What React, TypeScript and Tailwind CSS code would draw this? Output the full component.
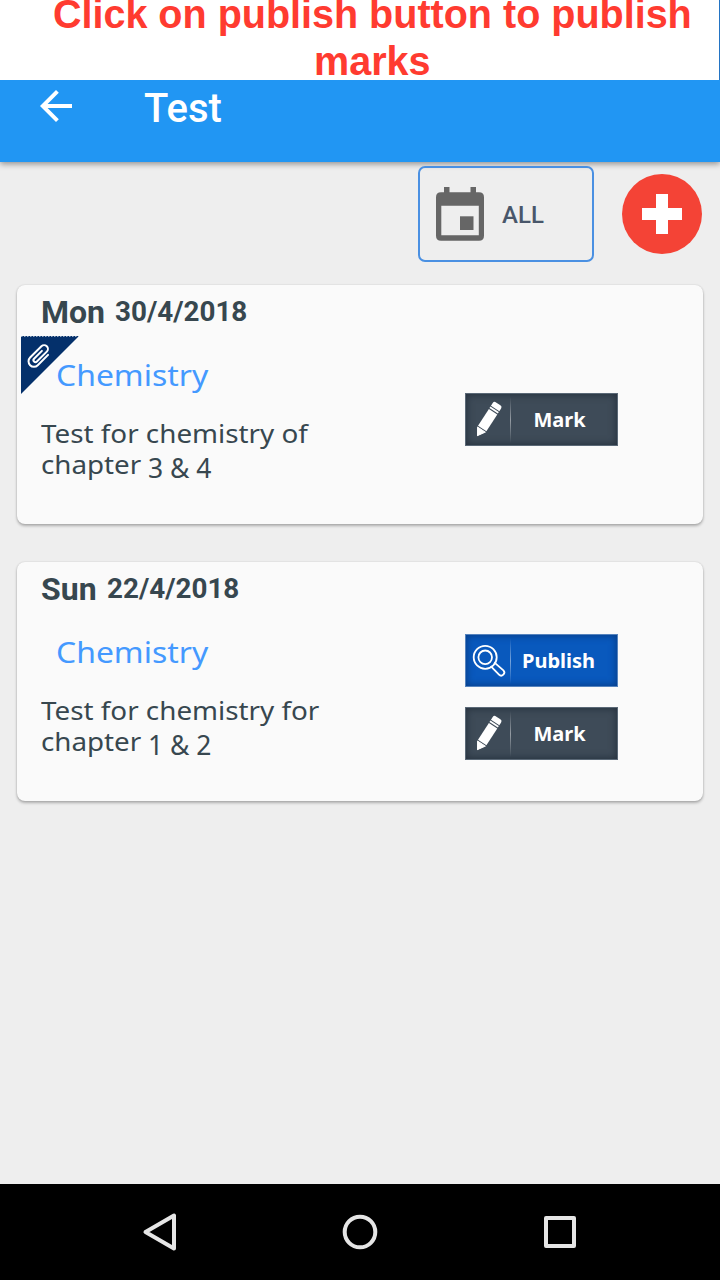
import type { ReactNode } from "react";

function PencilIcon() {
  return (
    <svg className="block h-[52px] w-[44px] shrink-0" viewBox="0 0 44 52" fill="#fff">
      <g transform="translate(11.3 42) rotate(33)">
        <path d="M0 -0.4 L-4.6 -7.6 L4.6 -7.6 Z" strokeLinejoin="round" stroke="#fff" strokeWidth="1" />
        <path d="M-5 -9 H5 V-29 H-5 Z" />
        <path d="M-5 -30 H5 V-31.8 H-5 Z" />
        <path d="M-5 -32.8 H5 V-36 Q5 -38.4 2.6 -38.4 H-2.6 Q-5 -38.4 -5 -36 Z" />
      </g>
    </svg>
  );
}

function MagnifierIcon() {
  return (
    <svg className="block h-[52px] w-[44px] shrink-0" viewBox="0 0 44 52" fill="none" stroke="#fff" strokeWidth="1.8">
      <circle cx="19.2" cy="22.3" r="11.5" />
      <circle cx="19.2" cy="22.3" r="6.8" />
      <path d="M25.2 31.6 L33 39.6 A2.9 2.9 0 0 0 37.4 35.4 L28.8 27.8" strokeLinecap="round" strokeLinejoin="round" />
    </svg>
  );
}

function ActionButton({ kind }: { kind: "mark" | "publish" }) {
  const publish = kind === "publish";
  return (
    <button
      className={
        publish
          ? "flex h-[53px] w-[153px] items-center border border-[#5583bd] bg-[#0959bd] shadow-[inset_0_0_7px_1px_#083e88]"
          : "flex h-[53px] w-[153px] items-center border border-[#5a6876] bg-[#3e4b58] shadow-[inset_0_0_7px_1px_#26323e]"
      }
    >
      {publish ? <MagnifierIcon /> : <PencilIcon />}
      <span className="h-[46px] w-px bg-linear-to-b from-transparent via-white/45 to-transparent" />
      <span
        className={
          publish
            ? "flex-1 pr-[11px] text-center font-['Noto_Sans',sans-serif] text-[20px] leading-[50px] font-bold text-white"
            : "flex-1 pr-[9px] text-center font-['Noto_Sans',sans-serif] text-[20px] leading-[50px] font-bold text-white"
        }
      >
        {publish ? "Publish" : "Mark"}
      </span>
    </button>
  );
}

function Attachment() {
  return (
    <svg className="absolute left-[4px] top-[51px] block h-[59px] w-[60px]" viewBox="0 0 60 59">
      <path d="M0 0 H58 L0 58 Z" fill="#04306b" />
      <path d="M0 0.5 H58" stroke="#c5d0dd" strokeWidth="0.8" strokeDasharray="1.5 1.5" />
      <g transform="translate(18.3 20) rotate(45)" fill="none" stroke="#fff" strokeWidth="2" strokeLinecap="round">
        <path d="M5.4 -7 V7.6 A5.4 5.4 0 0 1 -5.4 7.6 V-8.4 A3.8 3.8 0 0 1 2.2 -8.4 V5.6 A2 2 0 0 1 -1.8 5.6 V-5.5" />
      </g>
    </svg>
  );
}

type CardProps = {
  day: string;
  date: string;
  line: string;
  chapters: string;
  attached?: boolean;
  children: ReactNode;
};

function TestCard({ day, date, line, chapters, attached, children }: CardProps) {
  return (
    <section className="relative flex h-[239px] w-full rounded-[8px] bg-[#fafafa] shadow-[0_2px_3px_rgba(0,0,0,0.27),0_0_2px_rgba(0,0,0,0.14)]">
      {attached && <Attachment />}
      <div className="relative w-[448px] pl-[24px] text-[#37474f]">
        <div className="flex h-[54px] pt-[8px] font-[Roboto,sans-serif] font-bold whitespace-nowrap">
          <span className="pr-[10px] text-[32px] leading-[38px]">{day}</span>
          <span className="block origin-left scale-x-[0.993] text-[28px] leading-[37px]">{date}</span>
        </div>
        <h2 className="h-[79px] pl-[15px] pt-[16px] font-['Noto_Sans',sans-serif] text-[29px] leading-[39px] text-[#4499ff]">
          <span className="block origin-left scale-x-[1.1] whitespace-nowrap">Chemistry</span>
        </h2>
        <p className="font-['Noto_Sans',sans-serif] text-[25px] leading-[31px] whitespace-nowrap">
          <span className="block origin-left scale-x-[1.112]">{line}</span>
          <span className="flex gap-[17px]">
            <span className="block origin-left scale-x-[1.11]">chapter</span>
            <span className="relative top-[3px] block origin-left scale-x-[0.98] text-[27px]">{chapters}</span>
          </span>
        </p>
      </div>
      <div className="flex flex-col">{children}</div>
    </section>
  );
}

export default function App() {
  return (
    <main className="flex h-[1280px] w-[720px] flex-col overflow-hidden bg-[#eeeeee]">
      <div className="relative z-10 h-[80px] shrink-0 border-r border-[#2374c4] bg-white text-center font-['Liberation_Sans',sans-serif] text-[40px] leading-[47px] font-bold text-[#ff3b30]">
        <div className="-mt-[9px] origin-center scale-x-[0.988] pl-[26px]">Click on publish button to publish</div>
        <div className="scale-x-[0.988] pl-[26px]">marks</div>
      </div>
      <header className="flex h-[82px] shrink-0 bg-[#2196f3] pl-[40px] shadow-[0_2px_6px_rgba(0,0,0,0.4)]">
        <svg className="mt-[10px] block h-[32px] w-[32px]" viewBox="0 0 32 32">
          <path d="M32 14 H7.6 L18.8 2.8 L16 0 L0 16 L16 32 L18.8 29.2 L7.6 18 H32 Z" fill="#fff" />
        </svg>
        <h1 className="ml-[72px] mt-[5px] font-[Roboto,sans-serif] text-[40px] leading-[48px] font-medium text-white">Test</h1>
      </header>
      <div className="flex h-[123px] shrink-0 justify-end gap-[28px] pr-[18px] pt-[4px]">
        <button className="flex h-[96px] w-[176px] items-center rounded-[7px] border-2 border-[#4a90e2] pl-[16px]">
          <svg className="block h-[54px] w-[48px]" viewBox="0 0 48 54" fill="#666">
            <path fillRule="evenodd" d="M8 0 H13.5 V5.3 H34.5 V0 H40 V5.3 H43 Q48 5.3 48 10.3 V48.7 Q48 53.7 43 53.7 H5 Q0 53.7 0 48.7 V10.3 Q0 5.3 5 5.3 H8 Z M5.3 18.8 V48.2 H42.8 V18.8 Z" />
            <path d="M24 29.3 H37.5 V43 H24 Z" />
          </svg>
          <span className="ml-[18px] pt-[2px] font-[Roboto,sans-serif] text-[24px] leading-[28px] font-medium text-[#48566a]">ALL</span>
        </button>
        <button className="mt-[8px] flex h-[80px] w-[80px] items-center justify-center rounded-full bg-[#f44336]">
          <svg className="block h-[40px] w-[40px]" viewBox="0 0 40 40">
            <path d="M14 0 H26 V14 H40 V26 H26 V40 H14 V26 H0 V14 H14 Z" fill="#fff" />
          </svg>
        </button>
      </div>
      <div className="flex flex-1 flex-col gap-[38px] px-[17px]">
        <TestCard day="Mon" date="30/4/2018" line="Test for chemistry of" chapters="3 & 4" attached>
          <div className="pt-[108px]">
            <ActionButton kind="mark" />
          </div>
        </TestCard>
        <TestCard day="Sun" date="22/4/2018" line="Test for chemistry for" chapters="1 & 2">
          <div className="flex flex-col gap-[20px] pt-[72px]">
            <ActionButton kind="publish" />
            <ActionButton kind="mark" />
          </div>
        </TestCard>
      </div>
      <nav className="h-[96px] shrink-0 bg-black">
        <svg className="block h-[96px] w-[720px]" viewBox="0 0 720 96" fill="none" stroke="#e6e6e6" strokeWidth="4" strokeLinejoin="round">
          <path d="M145.5 48 L174 31.5 V64.5 Z" />
          <circle cx="360" cy="48" r="15.3" />
          <path d="M546 34 H574 V62 H546 Z" />
        </svg>
      </nav>
    </main>
  );
}
